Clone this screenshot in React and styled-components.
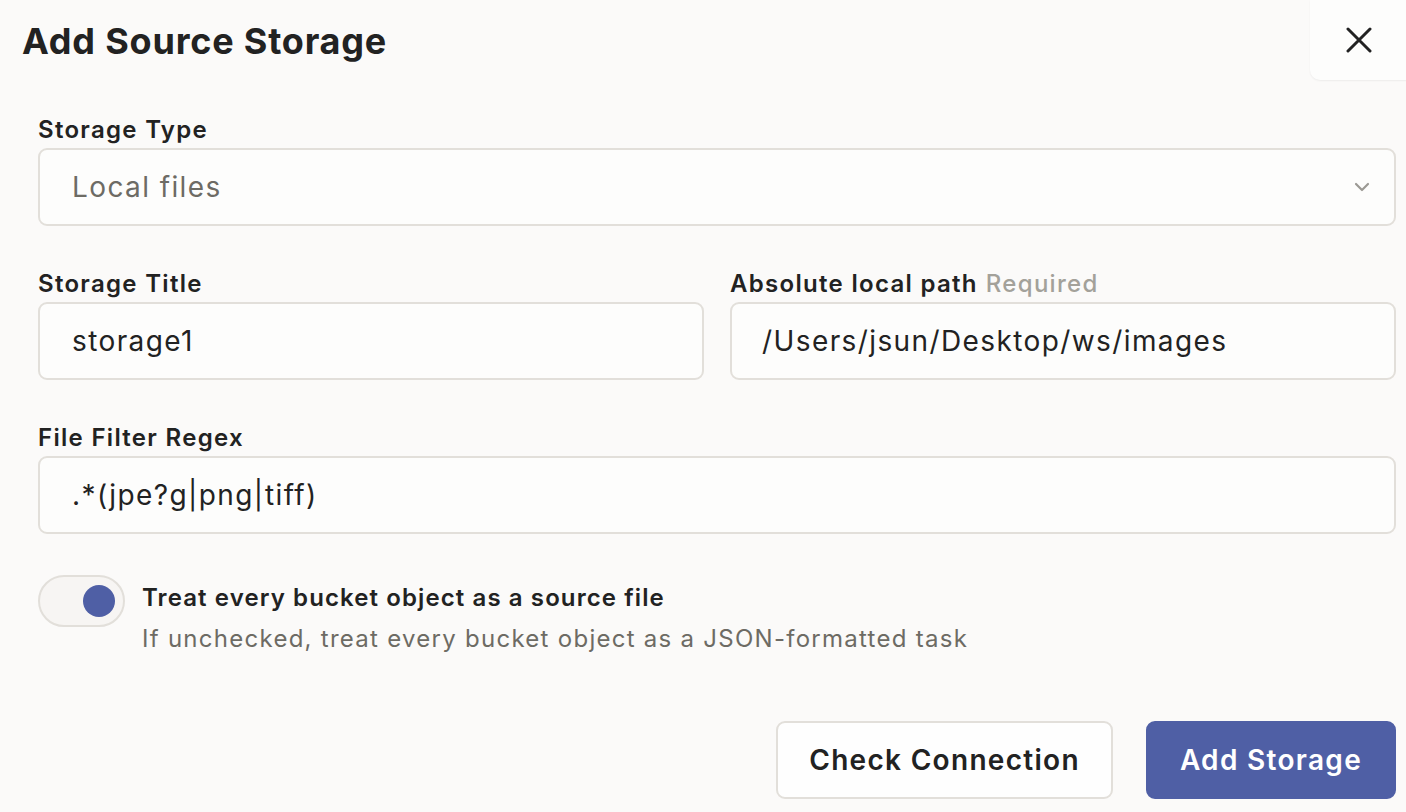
import React, { useState } from 'react';
import styled, { createGlobalStyle } from 'styled-components';

const GlobalStyle = createGlobalStyle`
  body {
    margin: 0;
    background: #fbfaf9;
    font-family: Inter, "Noto Sans", sans-serif;
    color: #222222;
  }
`;

const Page = styled.div`
  width: 1406px;
  height: 812px;
  overflow: hidden;
  background: #fbfaf9;
`;

const Header = styled.header`
  display: flex;
  align-items: flex-start;
  justify-content: space-between;
  height: 84px;
`;

const Title = styled.h1`
  margin: 0;
  padding: 18px 0 0 22px;
  font-size: 36px;
  line-height: 46px;
  font-weight: 700;
  letter-spacing: 0.8px;
  color: #222222;
`;

const CloseButton = styled.button`
  width: 100px;
  height: 80px;
  margin-right: -4px;
  border: none;
  border-radius: 0 0 0 10px;
  background: #fdfdfc;
  box-shadow: 0 1px 2px rgba(0, 0, 0, 0.06);
  display: flex;
  align-items: center;
  justify-content: center;
  padding: 0 2px 0 0;
  cursor: pointer;
`;

const Form = styled.form`
  display: flex;
  flex-direction: column;
  gap: 43px;
  padding: 31px 10px 0 38px;
`;

const Row = styled.div`
  display: grid;
  grid-template-columns: 1fr 1fr;
  gap: 26px;
`;

const Field = styled.div`
  display: flex;
  flex-direction: column;
  gap: 3px;
`;

const Label = styled.label`
  font-size: 24px;
  line-height: 30px;
  font-weight: 600;
  letter-spacing: 1.3px;
  color: #222222;
  display: flex;
  gap: 8px;
`;

const Hint = styled.span`
  color: #a3a19a;
  font-weight: 500;
`;

const Box = styled.div`
  position: relative;
  height: 78px;
  box-sizing: border-box;
  border: 2px solid #e2dfda;
  border-radius: 9px;
  background: #fdfdfc;
  display: flex;
  align-items: center;
  padding-left: ${(p) => p.$pad || 32}px;
  font-size: 28px;
  letter-spacing: 1.4px;
  color: ${(p) => (p.$muted ? '#6d6b64' : '#222222')};
`;

const Chevron = styled.svg`
  position: absolute;
  right: 24px;
  top: 32px;
`;

const ToggleRow = styled.div`
  display: flex;
  align-items: flex-start;
  gap: 17px;
  margin-top: -2px;
`;

const Switch = styled.button`
  width: 87px;
  height: 52px;
  flex-shrink: 0;
  box-sizing: border-box;
  border: 2px solid #e2dfda;
  border-radius: 26px;
  background: #f7f5f3;
  display: flex;
  align-items: center;
  justify-content: ${(p) => (p.$on ? 'flex-end' : 'flex-start')};
  padding: 0 8px;
  cursor: pointer;
`;

const Knob = styled.span`
  width: 32px;
  height: 32px;
  border-radius: 50%;
  background: #4f5fa5;
`;

const ToggleText = styled.div`
  display: flex;
  flex-direction: column;
  gap: 11px;
  padding-top: 8px;
`;

const ToggleTitle = styled.span`
  font-size: 24px;
  line-height: 30px;
  font-weight: 600;
  letter-spacing: 1.1px;
`;

const ToggleSub = styled.span`
  font-size: 24px;
  line-height: 30px;
  letter-spacing: 1.27px;
  color: #6d6b64;
`;

const Actions = styled.div`
  display: flex;
  justify-content: flex-end;
  gap: 33px;
  margin-top: 24px;
`;

const Button = styled.button`
  height: 78px;
  box-sizing: border-box;
  padding: 0 ${(p) => (p.$primary ? 32 : 31)}px;
  border-radius: 9px;
  border: 2px solid ${(p) => (p.$primary ? '#4f5fa5' : '#e2dfda')};
  background: ${(p) => (p.$primary ? '#4f5fa5' : '#fefefe')};
  color: ${(p) => (p.$primary ? '#ffffff' : '#222222')};
  font-family: Inter, "Noto Sans", sans-serif;
  font-size: 28px;
  font-weight: 600;
  letter-spacing: 1.3px;
  cursor: pointer;
`;

function App() {
  const [asSource, setAsSource] = useState(true);

  return (
    <Page>
      <GlobalStyle />
      <Header>
        <Title>Add Source Storage</Title>
        <CloseButton type="button" aria-label="Close">
          <svg width="26" height="26" viewBox="0 0 26 26">
            <path d="M2 2L24 24M24 2L2 24" stroke="#222" strokeWidth="3" strokeLinecap="round" />
          </svg>
        </CloseButton>
      </Header>

      <Form>
        <Field>
          <Label>Storage Type</Label>
          <Box $muted>
            Local files
            <Chevron width="16" height="10" viewBox="0 0 16 10">
              <path d="M2 2L8 8L14 2" fill="none" stroke="#9c9a94" strokeWidth="2.2" strokeLinecap="round" strokeLinejoin="round" />
            </Chevron>
          </Box>
        </Field>

        <Row>
          <Field>
            <Label>Storage Title</Label>
            <Box>storage1</Box>
          </Field>
          <Field>
            <Label>
              Absolute local path
              <Hint>Required</Hint>
            </Label>
            <Box $pad={30}>/Users/jsun/Desktop/ws/images</Box>
          </Field>
        </Row>

        <Field>
          <Label>File Filter Regex</Label>
          <Box>.*(jpe?g|png|tiff)</Box>
        </Field>

        <ToggleRow>
          <Switch type="button" $on={asSource} onClick={() => setAsSource(!asSource)}>
            <Knob />
          </Switch>
          <ToggleText>
            <ToggleTitle>Treat every bucket object as a source file</ToggleTitle>
            <ToggleSub>If unchecked, treat every bucket object as a JSON-formatted task</ToggleSub>
          </ToggleText>
        </ToggleRow>

        <Actions>
          <Button type="button">Check Connection</Button>
          <Button type="button" $primary>Add Storage</Button>
        </Actions>
      </Form>
    </Page>
  );
}

export default App;
